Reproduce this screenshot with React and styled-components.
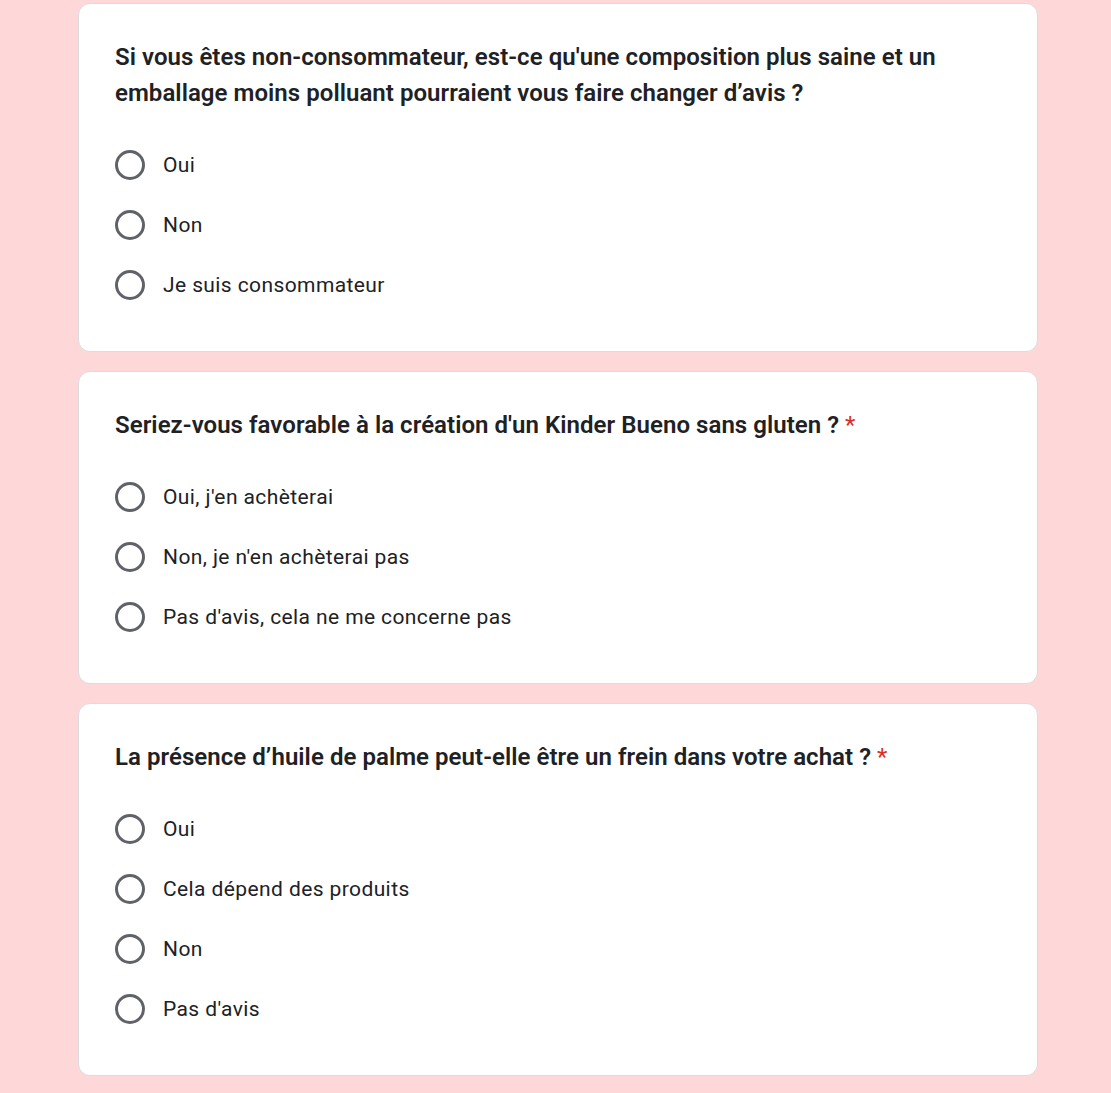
import React from 'react'
import styled, { createGlobalStyle } from 'styled-components'

const questions = [
  {
    title:
      "Si vous êtes non-consommateur, est-ce qu'une composition plus saine et un emballage moins polluant pourraient vous faire changer d’avis ?",
    required: false,
    options: ['Oui', 'Non', 'Je suis consommateur'],
  },
  {
    title: "Seriez-vous favorable à la création d'un Kinder Bueno sans gluten ?",
    required: true,
    options: ["Oui, j'en achèterai", "Non, je n'en achèterai pas", "Pas d'avis, cela ne me concerne pas"],
  },
  {
    title: 'La présence d’huile de palme peut-elle être un frein dans votre achat ?',
    required: true,
    options: ['Oui', 'Cela dépend des produits', 'Non', "Pas d'avis"],
  },
]

const App = () => {
  return (
    <>
      <GlobalStyle />
      <Page>
        {questions.map((q) => (
          <Card key={q.title}>
            <Title>
              {q.title}
              {q.required && <Star> *</Star>}
            </Title>
            <Options>
              {q.options.map((opt) => (
                <Option key={opt}>
                  <Radio />
                  <OptionLabel>{opt}</OptionLabel>
                </Option>
              ))}
            </Options>
          </Card>
        ))}
      </Page>
    </>
  )
}

export default App

const GlobalStyle = createGlobalStyle`
  html, body {
    margin: 0;
    padding: 0;
    background: #fed8d8;
  }
`

const Page = styled.main`
  display: flex;
  flex-direction: column;
  gap: 19px;

  width: 960px;
  margin-left: 78px;
  padding: 3px 0 20px;
  font-family: Roboto, 'Liberation Sans', sans-serif;
  color: #202124;
`

const Card = styled.section`
  display: flex;
  flex-direction: column;
  gap: 24px;

  box-sizing: border-box;
  padding: 35px 36px 36px;
  background: #fff;
  border: 1px solid #dadce0;
  border-radius: 12px;
`

const Title = styled.h2`
  margin: 0;
  font-size: 24px;
  line-height: 36px;
  font-weight: 600;
  letter-spacing: 0.05px;
  color: #202124;
`

const Star = styled.span`
  color: #d93025;
  font-weight: 400;
`

const Options = styled.div`
  display: flex;
  flex-direction: column;
`

const Option = styled.label`
  display: flex;
  align-items: center;
  gap: 18px;
  height: 60px;
`

const Radio = styled.span`
  box-sizing: border-box;
  width: 30px;
  height: 30px;
  border: 3px solid #5f6368;
  border-radius: 50%;
  flex-shrink: 0;
`

const OptionLabel = styled.span`
  font-size: 21px;
  line-height: 30px;
  letter-spacing: 0.4px;
  color: #202124;
`
